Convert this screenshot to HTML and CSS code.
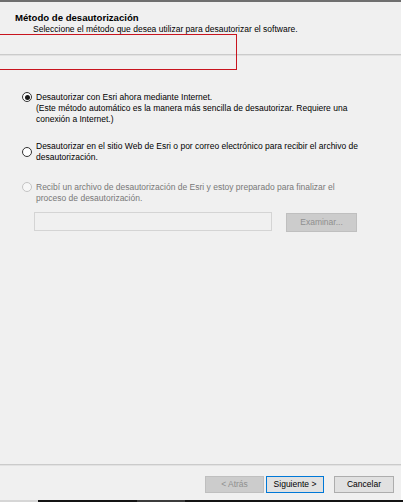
FILE: index.html
```html
<!DOCTYPE html>
<html lang="es">
<head>
<meta charset="utf-8">
<title>Método de desautorización</title>
<link rel="stylesheet" href="styles.css">
</head>
<body>
<div class="window">
  <div class="header">
    <div class="title">Método de desautorización</div>
    <div class="subtitle">Seleccione el método que desea utilizar para desautorizar el software.</div>
  </div>
  <div class="sep"></div>
  <div class="content">
    <div class="option option-top">
      <span class="radio checked"></span>
      <div class="label">Desautorizar con Esri ahora mediante Internet.<br>(Este método automático es la manera más sencilla de desautorizar. Requiere una<br>conexión a Internet.)</div>
    </div>
    <div class="option option-mid second">
      <span class="radio"></span>
      <div class="label">Desautorizar en el sitio Web de Esri o por correo electrónico para recibir el archivo de<br>desautorización.</div>
    </div>
    <div class="option option-top third disabled">
      <span class="radio"></span>
      <div class="label">Recibí un archivo de desautorización de Esri y estoy preparado para finalizar el<br>proceso de desautorización.</div>
    </div>
    <div class="file-row">
      <div class="field"></div>
      <div class="btn btn-disabled browse">Examinar...</div>
    </div>
  </div>
  <div class="footer">
    <div class="sep"></div>
    <div class="buttons">
      <div class="btn btn-disabled">&lt; Atrás</div>
      <div class="btn btn-default">Siguiente &gt;</div>
      <div class="btn btn-cancel">Cancelar</div>
    </div>
  </div>
  <div class="highlight"></div>
</div>
<div class="taskbar"><span class="tb-light"></span><span class="tb-dark"></span><span class="tb-mid"></span><span class="tb-dark2"></span></div>
</body>
</html>
```
FILE: styles.css
```css
html, body {
  margin: 0;
  padding: 0;
  background: #ffffff;
}
body {
  width: 403px;
  height: 502px;
  overflow: hidden;
  font-family: "Liberation Sans", Arial, sans-serif;
  font-size: 8.5px;
  line-height: 11px;
  color: #000;
}
.window {
  position: relative;
  width: 401px;
  height: 500px;
  box-sizing: border-box;
  border-top: 2px solid #6f6f6f;
  background: #f0f0f0;
  display: flex;
  flex-direction: column;
}
.header {
  height: 52px;
  box-sizing: border-box;
  padding: 9.5px 0 0 15px;
}
.title {
  font-weight: bold;
  font-size: 9.6px;
  line-height: 12px;
}
.subtitle {
  padding-left: 18px;
}
.sep {
  height: 1px;
  background: #cbcbcb;
  border-bottom: 1px solid #e2e2e2;
}
.content {
  flex: 1;
  padding: 35.5px 0 0 22px;
}
.option {
  display: flex;
  gap: 4px;
}
.option-top { align-items: flex-start; }
.option-mid { align-items: center; }
.option.second { margin-top: 16px; }
.option.third { margin-top: 19px; }
.radio {
  flex: none;
  width: 10px;
  height: 10px;
  box-sizing: border-box;
  border: 1px solid #333333;
  border-radius: 50%;
  background: #ffffff;
  position: relative;
  margin-top: 0.5px;
}
.option-mid .radio { margin-top: 0; }
.radio.checked::after {
  content: "";
  position: absolute;
  left: 1.5px;
  top: 1.5px;
  width: 5px;
  height: 5px;
  border-radius: 50%;
  background: #1a1a1a;
}
.disabled .radio {
  border-color: #c4c4c4;
  background: #f7f7f7;
}
.disabled .label {
  color: #787878;
}
.file-row {
  display: flex;
  align-items: flex-start;
  margin: 8.5px 0 0 12px;
}
.field {
  width: 238px;
  height: 19px;
  box-sizing: border-box;
  border: 1px solid #d4d4d4;
  background: #f0f0f0;
}
.btn {
  box-sizing: border-box;
  height: 17px;
  display: flex;
  align-items: center;
  justify-content: center;
  border: 1px solid #adadad;
  background: #e1e1e1;
  color: #000;
}
.btn-disabled {
  background: #cccccc;
  border-color: #bfbfbf;
  color: #8f8f8f;
  width: 59px;
}
.browse {
  width: 71px;
  height: 19px;
  margin: 1px 0 0 14px;
}
.footer {
  height: 36px;
}
.buttons {
  display: flex;
  padding: 10px 0 0 205px;
}
.btn-default {
  width: 58px;
  margin-left: 2px;
  border: 1.5px solid #0078d7;
  background: #e1e1e1;
}
.btn-cancel {
  width: 60px;
  margin-left: 10px;
}
.highlight {
  position: absolute;
  left: -3px;
  top: 32px;
  width: 240px;
  height: 36px;
  box-sizing: border-box;
  border: 1.5px solid #c8141e;
}
.taskbar {
  display: flex;
  height: 2px;
}
.tb-light { width: 38px; background: #d6d6d6; }
.tb-dark { width: 99px; background: #141414; }
.tb-mid { width: 48px; background: #3c3c3c; }
.tb-dark2 { flex: 1; background: #141414; }
```
